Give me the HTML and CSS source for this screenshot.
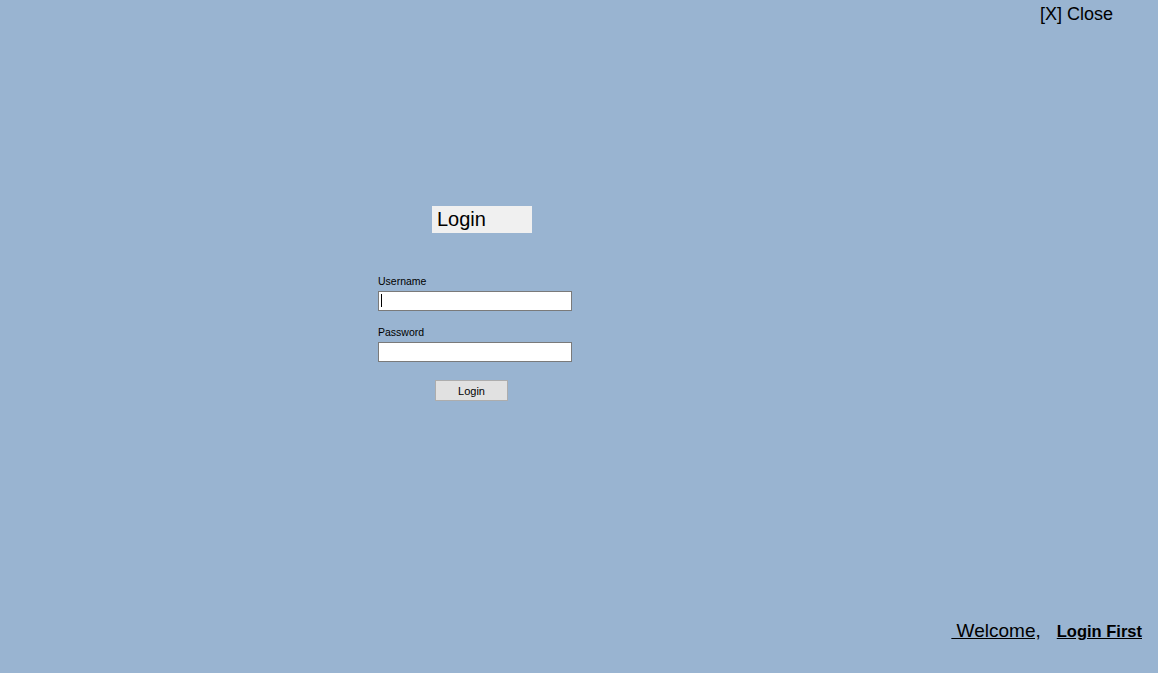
FILE: index.html
```html
<!DOCTYPE html>
<html lang="en">
<head>
<meta charset="utf-8">
<title>Login</title>
<link rel="stylesheet" href="styles.css">
</head>
<body>
<div class="page">
  <div class="topbar"><span class="close">[X] Close</span></div>
  <div class="login">
    <div class="title">Login</div>
    <label class="label" for="user">Username</label>
    <span class="field-wrap caret"><input class="field" id="user" type="text"></span>
    <label class="label label-pass" for="pass">Password</label>
    <span class="field-wrap"><input class="field" id="pass" type="password"></span>
    <button class="btn" type="button">Login</button>
  </div>
  <div class="footer">
    <span class="welcome">&nbsp;Welcome,</span>
    <span class="login-first">Login First</span>
  </div>
</div>
</body>
</html>
```

FILE: styles.css
```css
html, body {
  margin: 0;
  padding: 0;
}
body {
  background: #99b4d1;
  font-family: "Liberation Sans", Arial, sans-serif;
  color: #000;
}
.page {
  height: 673px;
  display: flex;
  flex-direction: column;
}
.topbar {
  display: flex;
  justify-content: flex-end;
  padding: 4px 45px 0 0;
}
.close {
  font-size: 18px;
  line-height: 21px;
}
.login {
  display: flex;
  flex-direction: column;
  align-items: flex-start;
  margin: 181px 0 0 378px;
}
.title {
  margin-left: 54px;
  width: 95px;
  height: 27px;
  padding-left: 5px;
  background: #f0f0f0;
  font-size: 20px;
  line-height: 27px;
}
.label {
  display: block;
  margin-top: 42px;
  font-size: 10.5px;
  line-height: 13px;
  height: 13px;
  margin-bottom: 3px;
}
.label-pass {
  margin-top: 15px;
}
.field-wrap {
  position: relative;
  display: block;
  height: 20px;
}
.caret::after {
  content: "";
  position: absolute;
  left: 3px;
  top: 3px;
  width: 1px;
  height: 13px;
  background: #000;
}
.field {
  box-sizing: border-box;
  display: block;
  width: 194px;
  height: 20px;
  margin: 0;
  padding: 0 2px;
  border: 1px solid #7a7a7a;
  background: #fff;
  outline: none;
  font-family: "Liberation Sans", Arial, sans-serif;
  font-size: 11px;
}
.btn {
  box-sizing: border-box;
  margin: 18px 0 0 57px;
  width: 73px;
  height: 21px;
  padding: 0;
  border: 1px solid #adadad;
  background: #e1e1e1;
  font-family: "Liberation Sans", Arial, sans-serif;
  font-size: 11px;
  color: #000;
}
.footer {
  margin-top: auto;
  display: flex;
  justify-content: flex-end;
  align-items: baseline;
  gap: 16px;
  padding: 0 16px 31px 0;
}
.welcome {
  font-size: 19px;
  line-height: 22px;
  text-decoration: underline;
}
.login-first {
  font-size: 16.5px;
  font-weight: bold;
  text-decoration: underline;
}
```
